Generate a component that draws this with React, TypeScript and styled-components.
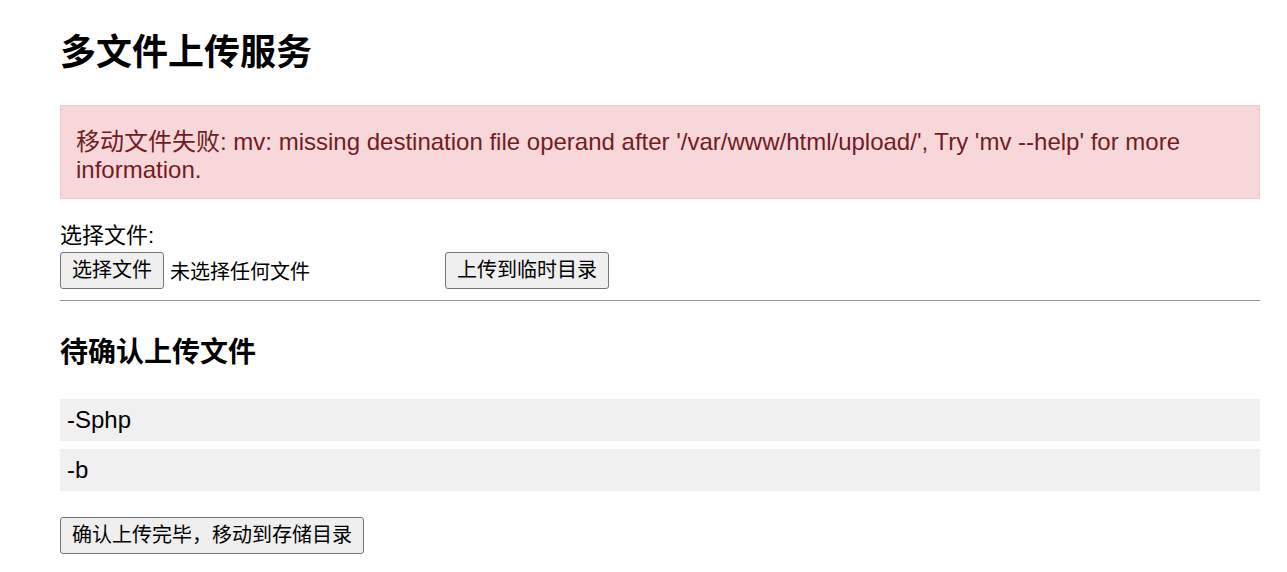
import React from 'react';
import styled, { createGlobalStyle } from 'styled-components';

const GlobalStyle = createGlobalStyle`
  html, body {
    margin: 0;
    padding: 0;
    background: #fff;
  }
  body {
    font-family: 'Liberation Sans', Arial, 'Noto Sans CJK SC', sans-serif;
    font-size: 20px;
    color: #000;
  }
`;

const Page = styled.div`
  width: 1200px;
  padding: 0 0 20px 60px;
`;

const Title = styled.h1`
  font-size: 36px;
  font-weight: bold;
  margin: 31px 0 30px;
  line-height: 44px;
`;

const ErrorBox = styled.div`
  background: #f8d7da;
  border: 1px solid #f5c6cb;
  color: #721c24;
  padding: 22px 15px 14px;
  font-size: 24px;
  line-height: 28px;
  margin-bottom: 23px;
`;

const UploadForm = styled.form`
  display: flex;
  flex-direction: column;
`;

const Label = styled.label`
  font-size: 22px;
  line-height: 27px;
  margin-bottom: 3px;
`;

const Row = styled.div`
  display: flex;
  align-items: center;
`;

const FilePicker = styled.div`
  display: flex;
  align-items: center;
  width: 385px;
`;

const FileStatus = styled.span`
  margin-left: 6px;
  font-size: 20px;
`;

const Button = styled.button`
  font-family: inherit;
  font-size: 20px;
  line-height: 23px;
  padding: 6px 11px;
  background: #efefef;
  border: 1px solid #767676;
  border-radius: 3px;
  color: #000;
  cursor: pointer;
`;

const Divider = styled.hr`
  border: none;
  border-top: 1px solid #999;
  margin: 11px 0 0;
`;

const SubTitle = styled.h2`
  font-size: 28px;
  font-weight: bold;
  margin: 36px 0 30px;
  line-height: 32px;
`;

const FileList = styled.ul`
  list-style: none;
  margin: 0 0 26px;
  padding: 0;
  display: flex;
  flex-direction: column;
  gap: 8px;
`;

const FileItem = styled.li`
  background: #f0f0f0;
  padding: 8px 7px;
  font-size: 24px;
  line-height: 26px;
`;

const pending = ['-Sphp', '-b'];

export default function App() {
  return (
    <>
      <GlobalStyle />
      <Page>
        <Title>多文件上传服务</Title>
        <ErrorBox>
          移动文件失败: mv: missing destination file operand after '/var/www/html/upload/', Try 'mv --help' for more information.
        </ErrorBox>
        <UploadForm onSubmit={(e) => e.preventDefault()}>
          <Label>选择文件:</Label>
          <Row>
            <FilePicker>
              <Button type="button">选择文件</Button>
              <FileStatus>未选择任何文件</FileStatus>
            </FilePicker>
            <Button type="submit">上传到临时目录</Button>
          </Row>
        </UploadForm>
        <Divider />
        <SubTitle>待确认上传文件</SubTitle>
        <FileList>
          {pending.map((name) => (
            <FileItem key={name}>{name}</FileItem>
          ))}
        </FileList>
        <Button type="button">确认上传完毕，移动到存储目录</Button>
      </Page>
    </>
  );
}
